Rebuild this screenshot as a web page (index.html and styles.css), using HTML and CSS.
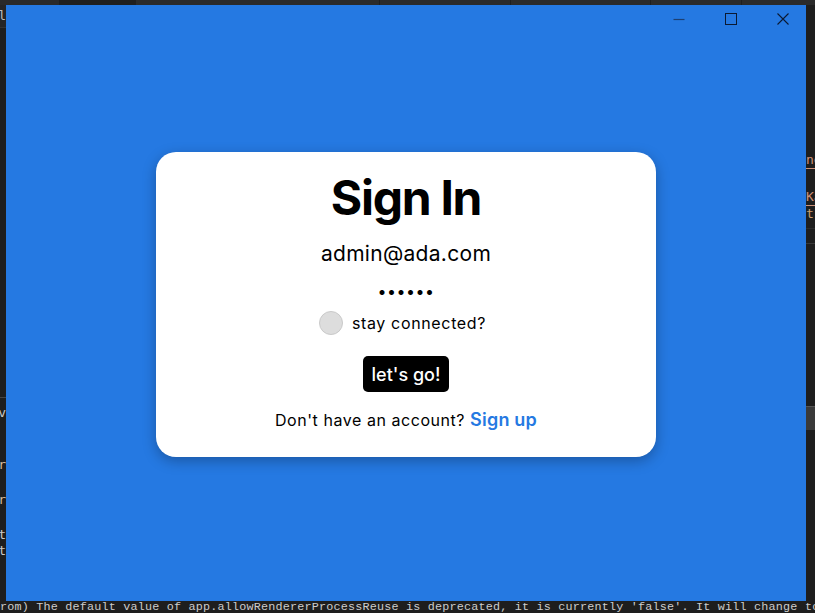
FILE: index.html
```html
<!DOCTYPE html>
<html lang="en">
<head>
<meta charset="utf-8">
<title>Sign In</title>
<link rel="stylesheet" href="styles.css">
</head>
<body>
<div class="screen">
  <div class="tabs">
    <div class="tab t1"></div>
    <div class="tab t2"></div>
    <div class="tab t3"></div>
    <div class="tab t4"></div>
    <div class="tab t5"></div>
    <div class="tab t6"></div>
    <div class="tab t7"></div>
  </div>

  <div class="strip strip-left">
    <div class="frag head"><span>nl</span></div>
    <div class="rule-left"></div>
    <div class="frag light l-v"><span>v</span></div>
    <div class="frag tan l-er1"><span>er</span></div>
    <div class="frag tan l-er2"><span>er</span></div>
    <div class="frag light l-ct1"><span>ct</span></div>
    <div class="frag light l-ct2"><span>ct</span></div>
  </div>

  <div class="window">
    <div class="titlebar">
      <div class="ctl">
        <svg width="12" height="12" viewBox="0 0 12 12"><path d="M0.5 6.5h11" stroke="#1d3f72" stroke-width="1.2"/></svg>
      </div>
      <div class="ctl">
        <svg width="12" height="12" viewBox="0 0 12 12"><rect x="0.5" y="0.5" width="11" height="11" fill="none" stroke="#0b1a33" stroke-width="1"/></svg>
      </div>
      <div class="ctl">
        <svg width="12" height="12" viewBox="0 0 12 12"><path d="M0.5 0.5L11.5 11.5M11.5 0.5L0.5 11.5" stroke="#0b1a33" stroke-width="1.1"/></svg>
      </div>
    </div>

    <form class="card">
      <h1 class="title">Sign In</h1>
      <div class="email">admin@ada.com</div>
      <div class="password">••••••</div>
      <label class="remember">
        <span class="check"></span>
        <span class="remember-text">stay connected?</span>
      </label>
      <button class="go" type="button">let's go!</button>
      <p class="signup">Don't have an account? <a class="signup-link">Sign up</a></p>
    </form>
  </div>

  <div class="strip strip-right">
    <div class="rfrag orange r1"><span>ne</span></div>
    <div class="rfrag orange r2"><span>Ka</span></div>
    <div class="rfrag pale r3"><span>t1</span></div>
    <div class="rrule r-rule1"></div>
    <div class="rrule r-rule2"></div>
    <div class="rblock"></div>
  </div>

  <div class="terminal"><span>rom) The default value of app.allowRendererProcessReuse is deprecated, it is currently 'false'.  It will change to be</span></div>
</div>
</body>
</html>
```

FILE: styles.css
```css
* { box-sizing: border-box; }

html, body {
  margin: 0;
  padding: 0;
  width: 815px;
  height: 613px;
  overflow: hidden;
  background: #1e1e1e;
}

.screen {
  display: grid;
  grid-template-columns: 6px 800px 9px;
  grid-template-rows: 5px 596px 12px;
  width: 815px;
  height: 613px;
}

/* top tab bar */
.tabs {
  grid-column: 1 / 4;
  grid-row: 1;
  display: flex;
  background: #2b2b2b;
}
.tab { height: 5px; border-right: 1px solid #1f1f1f; }
.t1 { width: 60px; background: #2a2a2a; }
.t2 { width: 76px; background: #1f1f1f; }
.t3 { width: 244px; background: #2b2b2b; }
.t4 { width: 131px; background: #2b2b2b; }
.t5 { width: 140px; background: #2b2b2b; }
.t6 { width: 91px; background: #2b2b2b; }
.t7 { flex: 1; background: #2b2b2b; border-right: none; }

/* side strips */
.strip {
  grid-row: 2;
  overflow: hidden;
  display: flex;
  flex-direction: column;
  font-family: "DejaVu Sans Mono", monospace;
  font-size: 13px;
  line-height: 16px;
}
.strip-left { grid-column: 1; background: #1e1e1e; }
.strip-right { grid-column: 3; background: #1e1e1e; }

.frag {
  display: flex;
  justify-content: flex-end;
  white-space: nowrap;
}
.frag.head {
  height: 23px;
  align-items: center;
  background: #252526;
  color: #bdbdbd;
  border-bottom: 1px solid #333;
}
.light { color: #c8c8c8; }
.tan { color: #d7ba9d; }
.rule-left { height: 1px; background: #454545; margin-top: 369px; }
.l-v { margin-top: 7px; }
.l-er1 { margin-top: 36px; }
.l-er2 { margin-top: 19px; }
.l-ct1 { margin-top: 19px; }
.l-ct2 { margin-top: 0; }

.rfrag { white-space: nowrap; }
.orange { color: #ce9178; }
.pale { color: #c8a070; }
.r1 { margin-top: 147px; border-bottom: 1px solid #ce9178; }
.r2 { margin-top: 20px; border-bottom: 1px solid #ce9178; }
.r3 { margin-top: 0; }
.rrule { height: 1px; background: #2c2c2c; }
.r-rule1 { margin-top: 6px; }
.r-rule2 { margin-top: 14px; background: #3a3a3a; }
.rblock { height: 24px; margin-top: 162px; background: #3a3a3a; border-top: 1px solid #555; }

/* bottom terminal */
.terminal {
  grid-column: 1 / 4;
  grid-row: 3;
  overflow: hidden;
  white-space: nowrap;
  font-family: "Liberation Mono", monospace;
  font-size: 11.75px;
  line-height: 12px;
  letter-spacing: 0.2px;
  color: #cccccc;
  background: #1e1e1e;
}

/* application window */
.window {
  grid-column: 2;
  grid-row: 2;
  position: relative;
  background: #2579e2;
  display: flex;
  align-items: center;
  justify-content: center;
  padding-top: 3px;
}

.titlebar {
  position: absolute;
  top: 0;
  right: -3px;
  display: flex;
}
.ctl {
  width: 52px;
  height: 27px;
  display: flex;
  align-items: center;
  justify-content: center;
}
.ctl svg { display: block; }

.card {
  width: 500px;
  height: 305px;
  background: #ffffff;
  border-radius: 20px;
  box-shadow: 0 4px 14px rgba(0, 0, 0, 0.28);
  display: flex;
  flex-direction: column;
  align-items: center;
  padding-top: 22px;
  font-family: "Inter", "Noto Sans", sans-serif;
  color: #000;
}

.title {
  margin: 0;
  font-size: 48px;
  line-height: 48px;
  font-weight: 700;
  letter-spacing: -1.3px;
}

.email {
  margin-top: 20px;
  font-size: 21px;
  line-height: 24px;
  letter-spacing: 0.3px;
}

.password {
  margin-top: 13px;
  font-size: 16px;
  line-height: 24px;
  letter-spacing: 0.5px;
}

.remember {
  margin: 8px 7px 0 0;
  display: flex;
  align-items: center;
  gap: 9px;
}
.check {
  width: 24px;
  height: 24px;
  border-radius: 50%;
  background: #dddddd;
  border: 1px solid #cacaca;
}
.remember-text {
  font-size: 16px;
  line-height: 24px;
  letter-spacing: 0.65px;
}

.go {
  margin-top: 21px;
  width: 86px;
  height: 36px;
  background: #000;
  color: #fff;
  border: none;
  border-radius: 5px;
  font-family: "Inter", "Noto Sans", sans-serif;
  font-size: 18px;
  font-weight: 500;
  padding: 0;
}

.signup {
  margin: 16px 0 0;
  font-size: 16px;
  line-height: 24px;
  letter-spacing: 0.55px;
}
.signup-link {
  color: #2579e2;
  font-weight: 600;
  font-size: 18px;
  letter-spacing: 0.2px;
}
```
